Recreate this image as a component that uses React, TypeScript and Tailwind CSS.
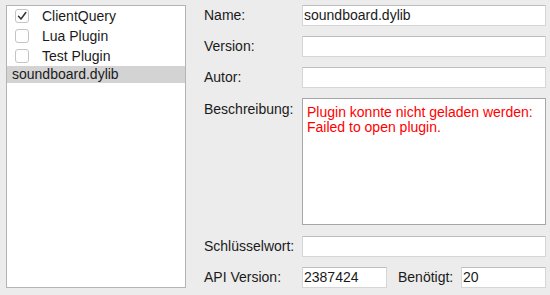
import React from 'react';

interface PluginItem {
  name: string;
  checked?: boolean;
  hasBox: boolean;
}

const plugins: PluginItem[] = [
  { name: 'ClientQuery', checked: true, hasBox: true },
  { name: 'Lua Plugin', hasBox: true },
  { name: 'Test Plugin', hasBox: true },
  { name: 'soundboard.dylib', hasBox: false },
];

const CheckBox: React.FC<{ checked?: boolean }> = ({ checked }) => (
  <div className="w-[14px] h-[14px] rounded-[3px] border border-[#c4c4c4] bg-white flex items-center justify-center">
    {checked && (
      <svg width="10" height="10" viewBox="0 0 10 10">
        <path d="M1.5 5.2 L4 8 L8.8 1.5" fill="none" stroke="#333" strokeWidth="1.5" strokeLinecap="round" strokeLinejoin="round" />
      </svg>
    )}
  </div>
);

const Field: React.FC<{ value?: string; className?: string }> = ({ value, className }) => (
  <div className={`h-[21px] bg-white border border-[#d6d6d6] border-t-[#bdbdbd] px-[1px] flex items-center text-[14px] text-[#1a1a1a] ${className ?? ''}`}>
    {value}
  </div>
);

const Label: React.FC<{ children: React.ReactNode }> = ({ children }) => (
  <div className="w-[98px] shrink-0 text-[14px] text-[#1a1a1a]">{children}</div>
);

export default function App() {
  return (
    <div
      className="w-[550px] h-[295px] bg-[#ececec] flex"
      style={{ fontFamily: '"Liberation Sans", Arial, sans-serif' }}
    >
      {/* Plugin list */}
      <div className="ml-[6px] mt-[5px] w-[180px] h-[283px] border border-[#b4b4b4] bg-white">
        {plugins.map((p) =>
          p.hasBox ? (
            <div key={p.name} className="h-[20px] flex items-center pl-[8px] gap-[13px] text-[14px] text-[#1a1a1a]">
              <CheckBox checked={p.checked} />
              <span>{p.name}</span>
            </div>
          ) : (
            <div key={p.name} className="h-[17px] flex items-center pl-[5px] bg-[#d3d3d3] text-[14px] text-[#1a1a1a]">
              {p.name}
            </div>
          )
        )}
      </div>

      {/* Details */}
      <div className="ml-[18px] mt-[5px] w-[342px] flex flex-col gap-[10px]">
        <div className="flex items-center">
          <Label>Name:</Label>
          <Field value="soundboard.dylib" className="flex-1" />
        </div>
        <div className="flex items-center">
          <Label>Version:</Label>
          <Field className="flex-1" />
        </div>
        <div className="flex items-center">
          <Label>Autor:</Label>
          <Field className="flex-1" />
        </div>
        <div className="flex items-start">
          <div className="pt-[1px]">
            <Label>Beschreibung:</Label>
          </div>
          <div className="flex-1 h-[127px] bg-white border border-[#a6a6a6] px-[4px] pt-[6px] text-[14px] leading-[15px] text-[#ff0000]">
            <div>Plugin konnte nicht geladen werden:</div>
            <div>Failed to open plugin.</div>
          </div>
        </div>
        <div className="flex items-center mt-[1px]">
          <Label>Schlüsselwort:</Label>
          <Field className="flex-1" />
        </div>
        <div className="flex items-center">
          <Label>API Version:</Label>
          <Field value="2387424" className="w-[85px]" />
          <div className="ml-[11px] w-[63px] shrink-0 text-[14px] text-[#1a1a1a]">Benötigt:</div>
          <Field value="20" className="flex-1" />
        </div>
      </div>
    </div>
  );
}
